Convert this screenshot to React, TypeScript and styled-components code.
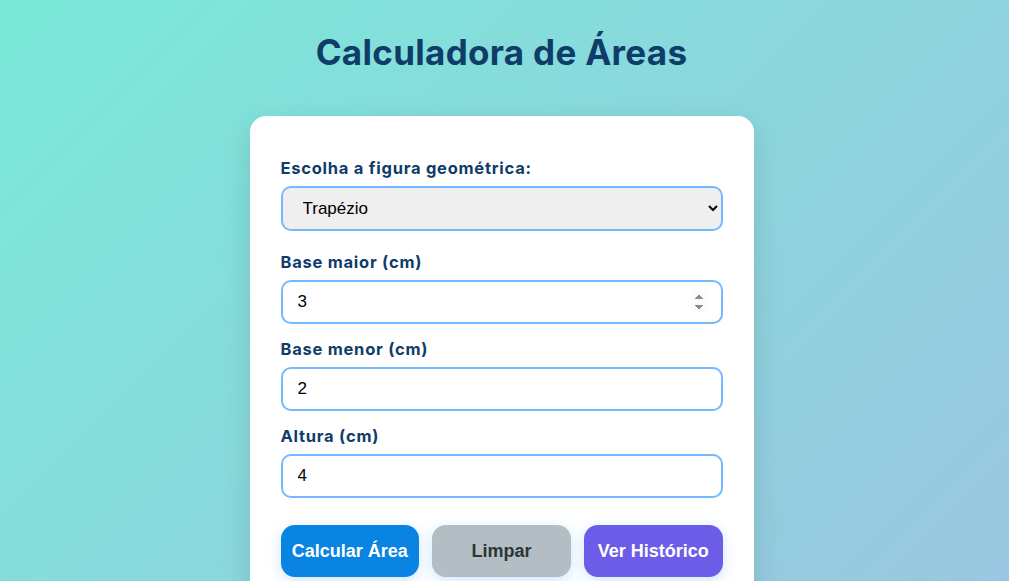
import { FC, useState } from 'react'
import styled, { createGlobalStyle } from 'styled-components'

const GlobalStyle = createGlobalStyle`
  html, body {
    margin: 0;
    padding: 0;
  }
  body {
    min-height: 100vh;
    font-family: 'Inter', 'Liberation Sans', Arial, sans-serif;
    background: linear-gradient(135deg, #7ae9d8 0%, #9ac6e1 100%) fixed;
  }
  * {
    box-sizing: border-box;
  }
`

type Shape = 'quadrado' | 'retangulo' | 'triangulo' | 'circulo' | 'trapezio'

const App: FC = () => {
  const [shape, setShape] = useState<Shape>('trapezio')
  const [baseMaior, setBaseMaior] = useState<string>('3')
  const [baseMenor, setBaseMenor] = useState<string>('2')
  const [altura, setAltura] = useState<string>('4')

  const limpar = () => {
    setBaseMaior('')
    setBaseMenor('')
    setAltura('')
  }

  return (
    <Page>
      <GlobalStyle />
      <Title>Calculadora de Áreas</Title>

      <Card>
        <Group $gap={21}>
          <Label>Escolha a figura geométrica:</Label>
          <Select value={shape} onChange={(e) => setShape(e.target.value as Shape)}>
            <option value="quadrado">Quadrado</option>
            <option value="retangulo">Retângulo</option>
            <option value="triangulo">Triângulo</option>
            <option value="circulo">Círculo</option>
            <option value="trapezio">Trapézio</option>
          </Select>
        </Group>

        <Group $gap={15}>
          <Label>Base maior (cm)</Label>
          <Input
            type="number"
            autoFocus
            value={baseMaior}
            onChange={(e) => setBaseMaior(e.target.value)}
          />
        </Group>

        <Group $gap={15}>
          <Label>Base menor (cm)</Label>
          <Input type="number" value={baseMenor} onChange={(e) => setBaseMenor(e.target.value)} />
        </Group>

        <Group $gap={27}>
          <Label>Altura (cm)</Label>
          <Input type="number" value={altura} onChange={(e) => setAltura(e.target.value)} />
        </Group>

        <Buttons>
          <Button $variant="primary">Calcular Área</Button>
          <Button $variant="neutral" onClick={limpar}>Limpar</Button>
          <Button $variant="history">Ver Histórico</Button>
        </Buttons>
      </Card>
    </Page>
  )
}

const Page = styled.div`
  display: flex;
  flex-direction: column;
  align-items: center;
  padding: 30px 26px 40px 20px;
`

const Title = styled.h1`
  margin: 0 0 42px;
  font-size: 35px;
  line-height: 44px;
  font-weight: 700;
  color: #0f3c68;
  letter-spacing: 0.3px;
`

const Card = styled.div`
  width: 504px;
  background: #ffffff;
  border-radius: 16px;
  padding: 42px 31px 30px;
  box-shadow: 0 10px 30px rgba(0, 0, 0, 0.12);
`

const Group = styled.div<{ $gap: number }>`
  display: flex;
  flex-direction: column;
  margin-bottom: ${(p) => p.$gap}px;
`

const Label = styled.label`
  font-size: 16.5px;
  line-height: 20px;
  font-weight: 700;
  color: #0f3c68;
  letter-spacing: 0.75px;
  margin-bottom: 8px;
`

const fieldBase = `
  width: 100%;
  border: 2px solid #74b9ff;
  border-radius: 10px;
  font-family: 'Liberation Sans', Arial, sans-serif;
  font-size: 17px;
  color: #000;
  outline: none;
`

const Select = styled.select`
  ${fieldBase}
  height: 45px;
  padding: 0 8px 0 16px;
  background: #efefef;
`

const Input = styled.input`
  ${fieldBase}
  height: 44px;
  padding: 0 14px 0 15px;
  background: #ffffff;
`

const Buttons = styled.div`
  display: flex;
  gap: 13px;
`

const variants = {
  primary: { bg: '#0984e3', fg: '#ffffff' },
  neutral: { bg: '#b2bec3', fg: '#2d3436' },
  history: { bg: '#6c5ce7', fg: '#ffffff' },
}

const Button = styled.button<{ $variant: keyof typeof variants }>`
  flex: 1;
  height: 52px;
  border: none;
  border-radius: 14px;
  background: ${(p) => variants[p.$variant].bg};
  color: ${(p) => variants[p.$variant].fg};
  font-family: 'Liberation Sans', Arial, sans-serif;
  font-size: 18px;
  font-weight: 700;
  cursor: pointer;
  box-shadow: 0 4px 14px rgba(116, 185, 255, 0.35);
`

export default App
